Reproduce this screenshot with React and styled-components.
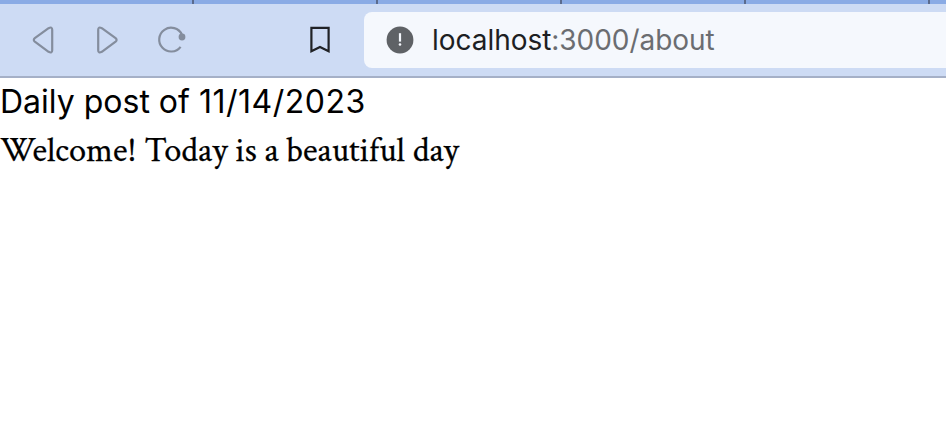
import React from "react";
import styled, { createGlobalStyle } from "styled-components";

const GlobalStyle = createGlobalStyle`
  * { box-sizing: border-box; }
  body { margin: 0; background: #fff; overflow: hidden; }
`;

const Window = styled.div`
  display: flex;
  flex-direction: column;
  width: 946px;
  height: 442px;
  overflow: hidden;
  background: #fff;
`;

const TabStrip = styled.div`
  display: flex;
  flex: none;
  height: 4px;
  background: #8aabe5;
`;

const Tab = styled.div`
  flex: none;
  width: ${(p) => p.$width}px;
  border-right: 2px solid #5b6b8e;
`;

const Toolbar = styled.header`
  display: flex;
  flex: none;
  align-items: center;
  height: 74px;
  padding-left: 24px;
  background: #cddbf4;
  border-bottom: 2px solid #a5b0c7;
`;

const ToolButton = styled.button`
  display: flex;
  flex: none;
  width: 40px;
  height: 40px;
  margin: 0 ${(p) => p.$gap}px 0 0;
  padding: 0;
  border: 0;
  background: none;
  color: ${(p) => (p.$active ? "#202226" : "#848d9d")};
`;

const Icon = styled.svg`
  display: block;
  width: 40px;
  height: 40px;
  fill: none;
  stroke: currentColor;
  stroke-width: 2.2;
  stroke-linejoin: round;
`;

const AddressBar = styled.div`
  display: flex;
  flex: 1;
  align-items: center;
  height: 56px;
  padding-left: 22px;
  gap: 18px;
  border-radius: 8px 0 0 8px;
  background: #f5f8fd;
`;

const SiteInfo = styled.svg`
  flex: none;
  width: 28px;
  height: 28px;
`;

const Url = styled.span`
  font: 400 28px/56px Inter, sans-serif;
  letter-spacing: -0.04px;
  white-space: nowrap;
  color: #6b6d71;
`;

const Host = styled.span`
  color: #1d1f23;
`;

const Page = styled.main`
  flex: 1;
  color: #000;
`;

const PostTitle = styled.div`
  font: 400 32px/48px Inter, sans-serif;
  white-space: nowrap;
`;

const PostDate = styled.span`
  letter-spacing: 0.52px;
`;

const PostBody = styled.div`
  font: 400 34.4px/50px "Crimson Text", "Liberation Serif", serif;
  -webkit-text-stroke: 0.25px #000;
  white-space: nowrap;
`;

const tabWidths = [194, 184, 184, 184, 184];

export default function App() {
  return (
    <>
      <GlobalStyle />
      <Window>
        <TabStrip>
          {tabWidths.map((width, i) => (
            <Tab key={i} $width={width} />
          ))}
        </TabStrip>
        <Toolbar>
          <ToolButton $gap={24} aria-label="Back">
            <Icon viewBox="0 0 40 40">
              <path d="M10.8 18.2L24.6 8.2Q28.2 6.3 28.2 9.8V30.2Q28.2 33.7 24.6 31.8L10.8 21.6Q8.8 19.9 10.8 18.2Z" />
            </Icon>
          </ToolButton>
          <ToolButton $gap={24} aria-label="Forward">
            <Icon viewBox="0 0 40 40">
              <path d="M27.6 18.2L13.8 8.2Q10.2 6.3 10.2 9.8V30.2Q10.2 33.7 13.8 31.8L27.6 21.6Q29.6 19.9 27.6 18.2Z" />
            </Icon>
          </ToolButton>
          <ToolButton $gap={108} aria-label="Reload">
            <Icon viewBox="0 0 40 40">
              <path d="M29.9 14.6A11.9 11.9 0 1 0 28.6 26.8" />
              <circle cx="30" cy="17" r="3.4" fill="currentColor" stroke="none" />
            </Icon>
          </ToolButton>
          <ToolButton $gap={24} $active aria-label="Bookmark">
            <Icon viewBox="0 0 40 40">
              <path d="M11.4 7.9H28.6V31.2L20 26.9L11.4 31.2Z" strokeLinejoin="miter" />
            </Icon>
          </ToolButton>
          <AddressBar>
            <SiteInfo viewBox="0 0 28 28">
              <circle cx="14" cy="14" r="13.4" fill="#5f6266" />
              <path d="M14 7.2V15.6" stroke="#f5f8fd" strokeWidth="2.2" />
              <circle cx="14" cy="18.5" r="1.3" fill="#f5f8fd" />
            </SiteInfo>
            <Url>
              <Host>localhost</Host>:3000/about
            </Url>
          </AddressBar>
        </Toolbar>
        <Page>
          <PostTitle>
            Daily post of <PostDate>11/14/2023</PostDate>
          </PostTitle>
          <PostBody>Welcome! Today is a beautiful day</PostBody>
        </Page>
      </Window>
    </>
  );
}
